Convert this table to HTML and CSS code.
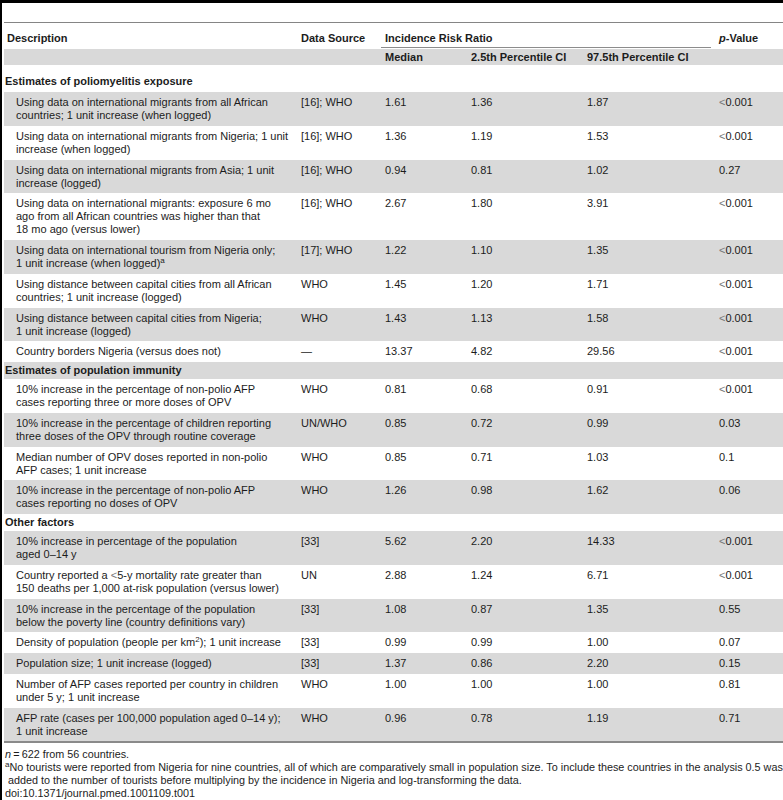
FILE: index.html
```html
<!DOCTYPE html>
<html>
<head>
  <title>Table 1</title>
  <link rel="stylesheet" href="styles.css">
</head>
<body>
  <div class="frame">
    <table class="data-table">
      <colgroup>
        <col class="c-desc">
        <col class="c-src">
        <col class="c-med">
        <col class="c-lo">
        <col class="c-hi">
        <col class="c-p">
      </colgroup>
      <thead>
        <tr class="head-top">
          <th>Description</th>
          <th>Data Source</th>
          <th colspan="3" class="group"><span>Incidence Risk Ratio</span></th>
          <th><i>p</i>-Value</th>
        </tr>
        <tr class="head-sub">
          <th></th>
          <th></th>
          <th>Median</th>
          <th>2.5th Percentile CI</th>
          <th>97.5th Percentile CI</th>
          <th></th>
        </tr>
      </thead>
      <tbody>
        <!-- Exposure -->
        <tr class="section first">
          <td colspan="6">Estimates of poliomyelitis exposure</td>
        </tr>
        <tr class="shade">
          <td class="desc">Using data on international migrants from all African<br>countries; 1 unit increase (when logged)</td>
          <td>[16]; WHO</td><td>1.61</td><td>1.36</td><td>1.87</td><td><span class="lt">&lt;</span>0.001</td>
        </tr>
        <tr>
          <td class="desc">Using data on international migrants from Nigeria; 1 unit<br>increase (when logged)</td>
          <td>[16]; WHO</td><td>1.36</td><td>1.19</td><td>1.53</td><td><span class="lt">&lt;</span>0.001</td>
        </tr>
        <tr class="shade">
          <td class="desc">Using data on international migrants from Asia; 1 unit<br>increase (logged)</td>
          <td>[16]; WHO</td><td>0.94</td><td>0.81</td><td>1.02</td><td>0.27</td>
        </tr>
        <tr>
          <td class="desc">Using data on international migrants: exposure 6 mo<br>ago from all African countries was higher than that<br>18 mo ago (versus lower)</td>
          <td>[16]; WHO</td><td>2.67</td><td>1.80</td><td>3.91</td><td><span class="lt">&lt;</span>0.001</td>
        </tr>
        <tr class="shade">
          <td class="desc">Using data on international tourism from Nigeria only;<br>1 unit increase (when logged)<sup>a</sup></td>
          <td>[17]; WHO</td><td>1.22</td><td>1.10</td><td>1.35</td><td><span class="lt">&lt;</span>0.001</td>
        </tr>
        <tr>
          <td class="desc">Using distance between capital cities from all African<br>countries; 1 unit increase (logged)</td>
          <td>WHO</td><td>1.45</td><td>1.20</td><td>1.71</td><td><span class="lt">&lt;</span>0.001</td>
        </tr>
        <tr class="shade">
          <td class="desc">Using distance between capital cities from Nigeria;<br>1 unit increase (logged)</td>
          <td>WHO</td><td>1.43</td><td>1.13</td><td>1.58</td><td><span class="lt">&lt;</span>0.001</td>
        </tr>
        <tr>
          <td class="desc">Country borders Nigeria (versus does not)</td>
          <td>—</td><td>13.37</td><td>4.82</td><td>29.56</td><td><span class="lt">&lt;</span>0.001</td>
        </tr>

        <!-- Immunity -->
        <tr class="section shade">
          <td colspan="6">Estimates of population immunity</td>
        </tr>
        <tr>
          <td class="desc">10% increase in the percentage of non-polio AFP<br>cases reporting three or more doses of OPV</td>
          <td>WHO</td><td>0.81</td><td>0.68</td><td>0.91</td><td><span class="lt">&lt;</span>0.001</td>
        </tr>
        <tr class="shade">
          <td class="desc">10% increase in the percentage of children reporting<br>three doses of the OPV through routine coverage</td>
          <td>UN/WHO</td><td>0.85</td><td>0.72</td><td>0.99</td><td>0.03</td>
        </tr>
        <tr>
          <td class="desc">Median number of OPV doses reported in non-polio<br>AFP cases; 1 unit increase</td>
          <td>WHO</td><td>0.85</td><td>0.71</td><td>1.03</td><td>0.1</td>
        </tr>
        <tr class="shade">
          <td class="desc">10% increase in the percentage of non-polio AFP<br>cases reporting no doses of OPV</td>
          <td>WHO</td><td>1.26</td><td>0.98</td><td>1.62</td><td>0.06</td>
        </tr>

        <!-- Other -->
        <tr class="section">
          <td colspan="6">Other factors</td>
        </tr>
        <tr class="shade">
          <td class="desc">10% increase in percentage of the population<br>aged 0–14 y</td>
          <td>[33]</td><td>5.62</td><td>2.20</td><td>14.33</td><td><span class="lt">&lt;</span>0.001</td>
        </tr>
        <tr>
          <td class="desc">Country reported a <span class="lt">&lt;</span>5-y mortality rate greater than<br>150 deaths per 1,000 at-risk population (versus lower)</td>
          <td>UN</td><td>2.88</td><td>1.24</td><td>6.71</td><td><span class="lt">&lt;</span>0.001</td>
        </tr>
        <tr class="shade">
          <td class="desc">10% increase in the percentage of the population<br>below the poverty line (country definitions vary)</td>
          <td>[33]</td><td>1.08</td><td>0.87</td><td>1.35</td><td>0.55</td>
        </tr>
        <tr>
          <td class="desc">Density of population (people per km<sup>2</sup>); 1 unit increase</td>
          <td>[33]</td><td>0.99</td><td>0.99</td><td>1.00</td><td>0.07</td>
        </tr>
        <tr class="shade">
          <td class="desc">Population size; 1 unit increase (logged)</td>
          <td>[33]</td><td>1.37</td><td>0.86</td><td>2.20</td><td>0.15</td>
        </tr>
        <tr>
          <td class="desc">Number of AFP cases reported per country in children<br>under 5 y; 1 unit increase</td>
          <td>WHO</td><td>1.00</td><td>1.00</td><td>1.00</td><td>0.81</td>
        </tr>
        <tr class="shade">
          <td class="desc">AFP rate (cases per 100,000 population aged 0–14 y);<br>1 unit increase</td>
          <td>WHO</td><td>0.96</td><td>0.78</td><td>1.19</td><td>0.71</td>
        </tr>
      </tbody>
    </table>

    <div class="notes">
      <p><i>n</i>&thinsp;=&thinsp;622 from 56 countries.</p>
      <p><sup>a</sup>No tourists were reported from Nigeria for nine countries, all of which are comparatively small in population size. To include these countries in the analysis 0.5 was<br>&nbsp;added to the number of tourists before multiplying by the incidence in Nigeria and log-transforming the data.</p>
      <p>doi:10.1371/journal.pmed.1001109.t001</p>
    </div>
  </div>
</body>
</html>
```

FILE: styles.css
```css
body {
  margin: 0;
  padding: 0;
  background-color: #fff;
  color: #1c1c1c;
  font-family: "Liberation Sans", Arial, sans-serif;
  font-size: 11px;
  line-height: 13px;
}

.frame {
  border-top: 3px solid #000;
  border-left: 2px solid #000;
  padding: 19px 0 2px 2px;
}

.data-table {
  width: 779px;
  border-collapse: collapse;
  table-layout: fixed;
  border-top: 1px solid #858585;
  border-bottom: 2px solid #8a8a8a;
}

.c-desc { width: 294px; }
.c-src { width: 84px; }
.c-med { width: 86px; }
.c-lo { width: 116px; }
.c-hi { width: 132px; }
.c-p { width: 67px; }

.data-table th,
.data-table td {
  text-align: left;
  vertical-align: top;
  padding: 4px 2px 3.75px 3px;
}

.data-table th {
  font-weight: bold;
}

.head-top th {
  padding-top: 9px;
  padding-bottom: 4px;
}

.head-top th.group {
  padding-bottom: 1px;
}

.head-top th.group span {
  display: block;
  margin-left: -4px;
  margin-right: 3px;
  padding-left: 4px;
  padding-bottom: 2px;
  border-bottom: 1px solid #8c8c8c;
}

.head-sub th {
  background-color: #d9d9d9;
  padding-top: 2px;
  padding-bottom: 1px;
}

.section td {
  font-weight: bold;
  padding: 2px 2px 2px 1px;
}

.section.first td {
  padding-top: 10px;
  padding-bottom: 4px;
}

.shade td {
  background-color: #d9d9d9;
}

.data-table td.desc {
  padding-left: 12px;
  white-space: nowrap;
}

.lt {
  color: #777;
  font-weight: normal;
}

sup {
  font-size: 8px;
  line-height: 0;
  vertical-align: 4px;
}

.notes {
  padding-top: 5px;
  padding-left: 1px;
  font-size: 10.8px;
  line-height: 13px;
  white-space: nowrap;
}

.notes p {
  margin: 0;
}
```
